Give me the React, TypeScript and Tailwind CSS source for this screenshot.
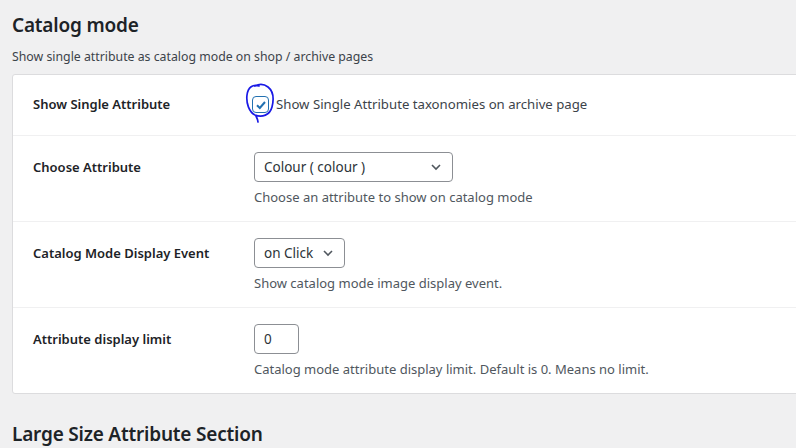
import React, { useState } from 'react';

const FONT = { fontFamily: '"Noto Sans", "Open Sans", sans-serif' };

const ChevronDown = () => (
  <svg width="12" height="12" viewBox="0 0 12 12" className="shrink-0">
    <path d="M2 4 L6 8 L10 4" fill="none" stroke="#50575e" strokeWidth="1.6" />
  </svg>
);

const App: React.FC = () => {
  const [checked, setChecked] = useState(true);

  return (
    <div className="w-[796px] h-[448px] overflow-hidden bg-[#f0f0f1] text-[#1d2327]" style={FONT}>
      <div className="pl-[12px] pt-[12px]">
        <h2 className="text-[19px] font-semibold leading-[26px] tracking-[-0.2px]">Catalog mode</h2>
        <p className="mt-[11px] text-[12.3px] leading-[16px] text-[#3c434a]">
          Show single attribute as catalog mode on shop / archive pages
        </p>

        {/* Settings panel */}
        <div className="mt-[9px] w-[800px] bg-white border border-[#dcdcde] rounded-[3px]">
          {/* Row 1 */}
          <div className="flex h-[61px] items-center border-b border-[#f0f0f1] pl-[20px]">
            <div className="w-[219px] text-[13px] font-semibold">Show Single Attribute</div>
            <label className="relative flex items-center gap-[7px] text-[13.2px] text-[#3c434a]">
              <button
                onClick={() => setChecked(!checked)}
                className="w-[17px] h-[17px] border border-[#2271b1] rounded-[4px] flex items-center justify-center bg-white"
              >
                {checked && (
                  <svg width="12" height="12" viewBox="0 0 12 12">
                    <path d="M2 6.2 L4.8 9 L10 3" fill="none" stroke="#2271b1" strokeWidth="2" />
                  </svg>
                )}
              </button>
              Show Single Attribute taxonomies on archive page
              {/* hand-drawn annotation circle */}
              <svg
                className="absolute left-[-7px] top-[-12px] pointer-events-none"
                width="32"
                height="40"
                viewBox="0 0 32 40"
              >
                <path
                  d="M14 3 C8 1 3 4 2 12 C1 20 4 29 10 32 C17 35 25 32 27 24 C29 16 28 8 23 4 C19 1 14 1 10 3 M11 33 C12 35 13 37 13 39"
                  fill="none"
                  stroke="#1a1ae6"
                  strokeWidth="1.7"
                  strokeLinecap="round"
                />
              </svg>
            </label>
          </div>

          {/* Row 2 */}
          <div className="flex h-[86px] border-b border-[#f0f0f1] pl-[20px] pt-[16px]">
            <div className="w-[221px] h-[32px] flex items-center text-[13px] font-semibold">Choose Attribute</div>
            <div>
              <div className="w-[199px] h-[30px] border border-[#8c8f94] rounded-[4px] flex items-center justify-between pl-[9px] pr-[10px] text-[13.5px] text-[#2c3338]">
                <span>Colour ( colour )</span>
                <ChevronDown />
              </div>
              <p className="mt-[6px] text-[13px] text-[#50575e]">Choose an attribute to show on catalog mode</p>
            </div>
          </div>

          {/* Row 3 */}
          <div className="flex h-[86px] border-b border-[#f0f0f1] pl-[20px] pt-[16px]">
            <div className="w-[221px] h-[32px] flex items-center text-[13px] font-semibold">Catalog Mode Display Event</div>
            <div>
              <div className="w-[91px] h-[30px] border border-[#8c8f94] rounded-[4px] flex items-center justify-between pl-[9px] pr-[10px] text-[13.5px] text-[#2c3338]">
                <span>on Click</span>
                <ChevronDown />
              </div>
              <p className="mt-[6px] text-[13px] text-[#50575e]">Show catalog mode image display event.</p>
            </div>
          </div>

          {/* Row 4 */}
          <div className="flex h-[85px] pl-[20px] pt-[16px]">
            <div className="w-[221px] h-[32px] flex items-center text-[13px] font-semibold">Attribute display limit</div>
            <div>
              <div className="w-[45px] h-[30px] border border-[#8c8f94] rounded-[4px] flex items-center pl-[9px] text-[13.5px] text-[#2c3338]">
                0
              </div>
              <p className="mt-[6px] text-[13px] text-[#50575e]">
                Catalog mode attribute display limit. Default is 0. Means no limit.
              </p>
            </div>
          </div>
        </div>

        <h2 className="mt-[27px] text-[19px] font-semibold leading-[26px] tracking-[-0.2px]">Large Size Attribute Section</h2>
      </div>
    </div>
  );
};

export default App;
